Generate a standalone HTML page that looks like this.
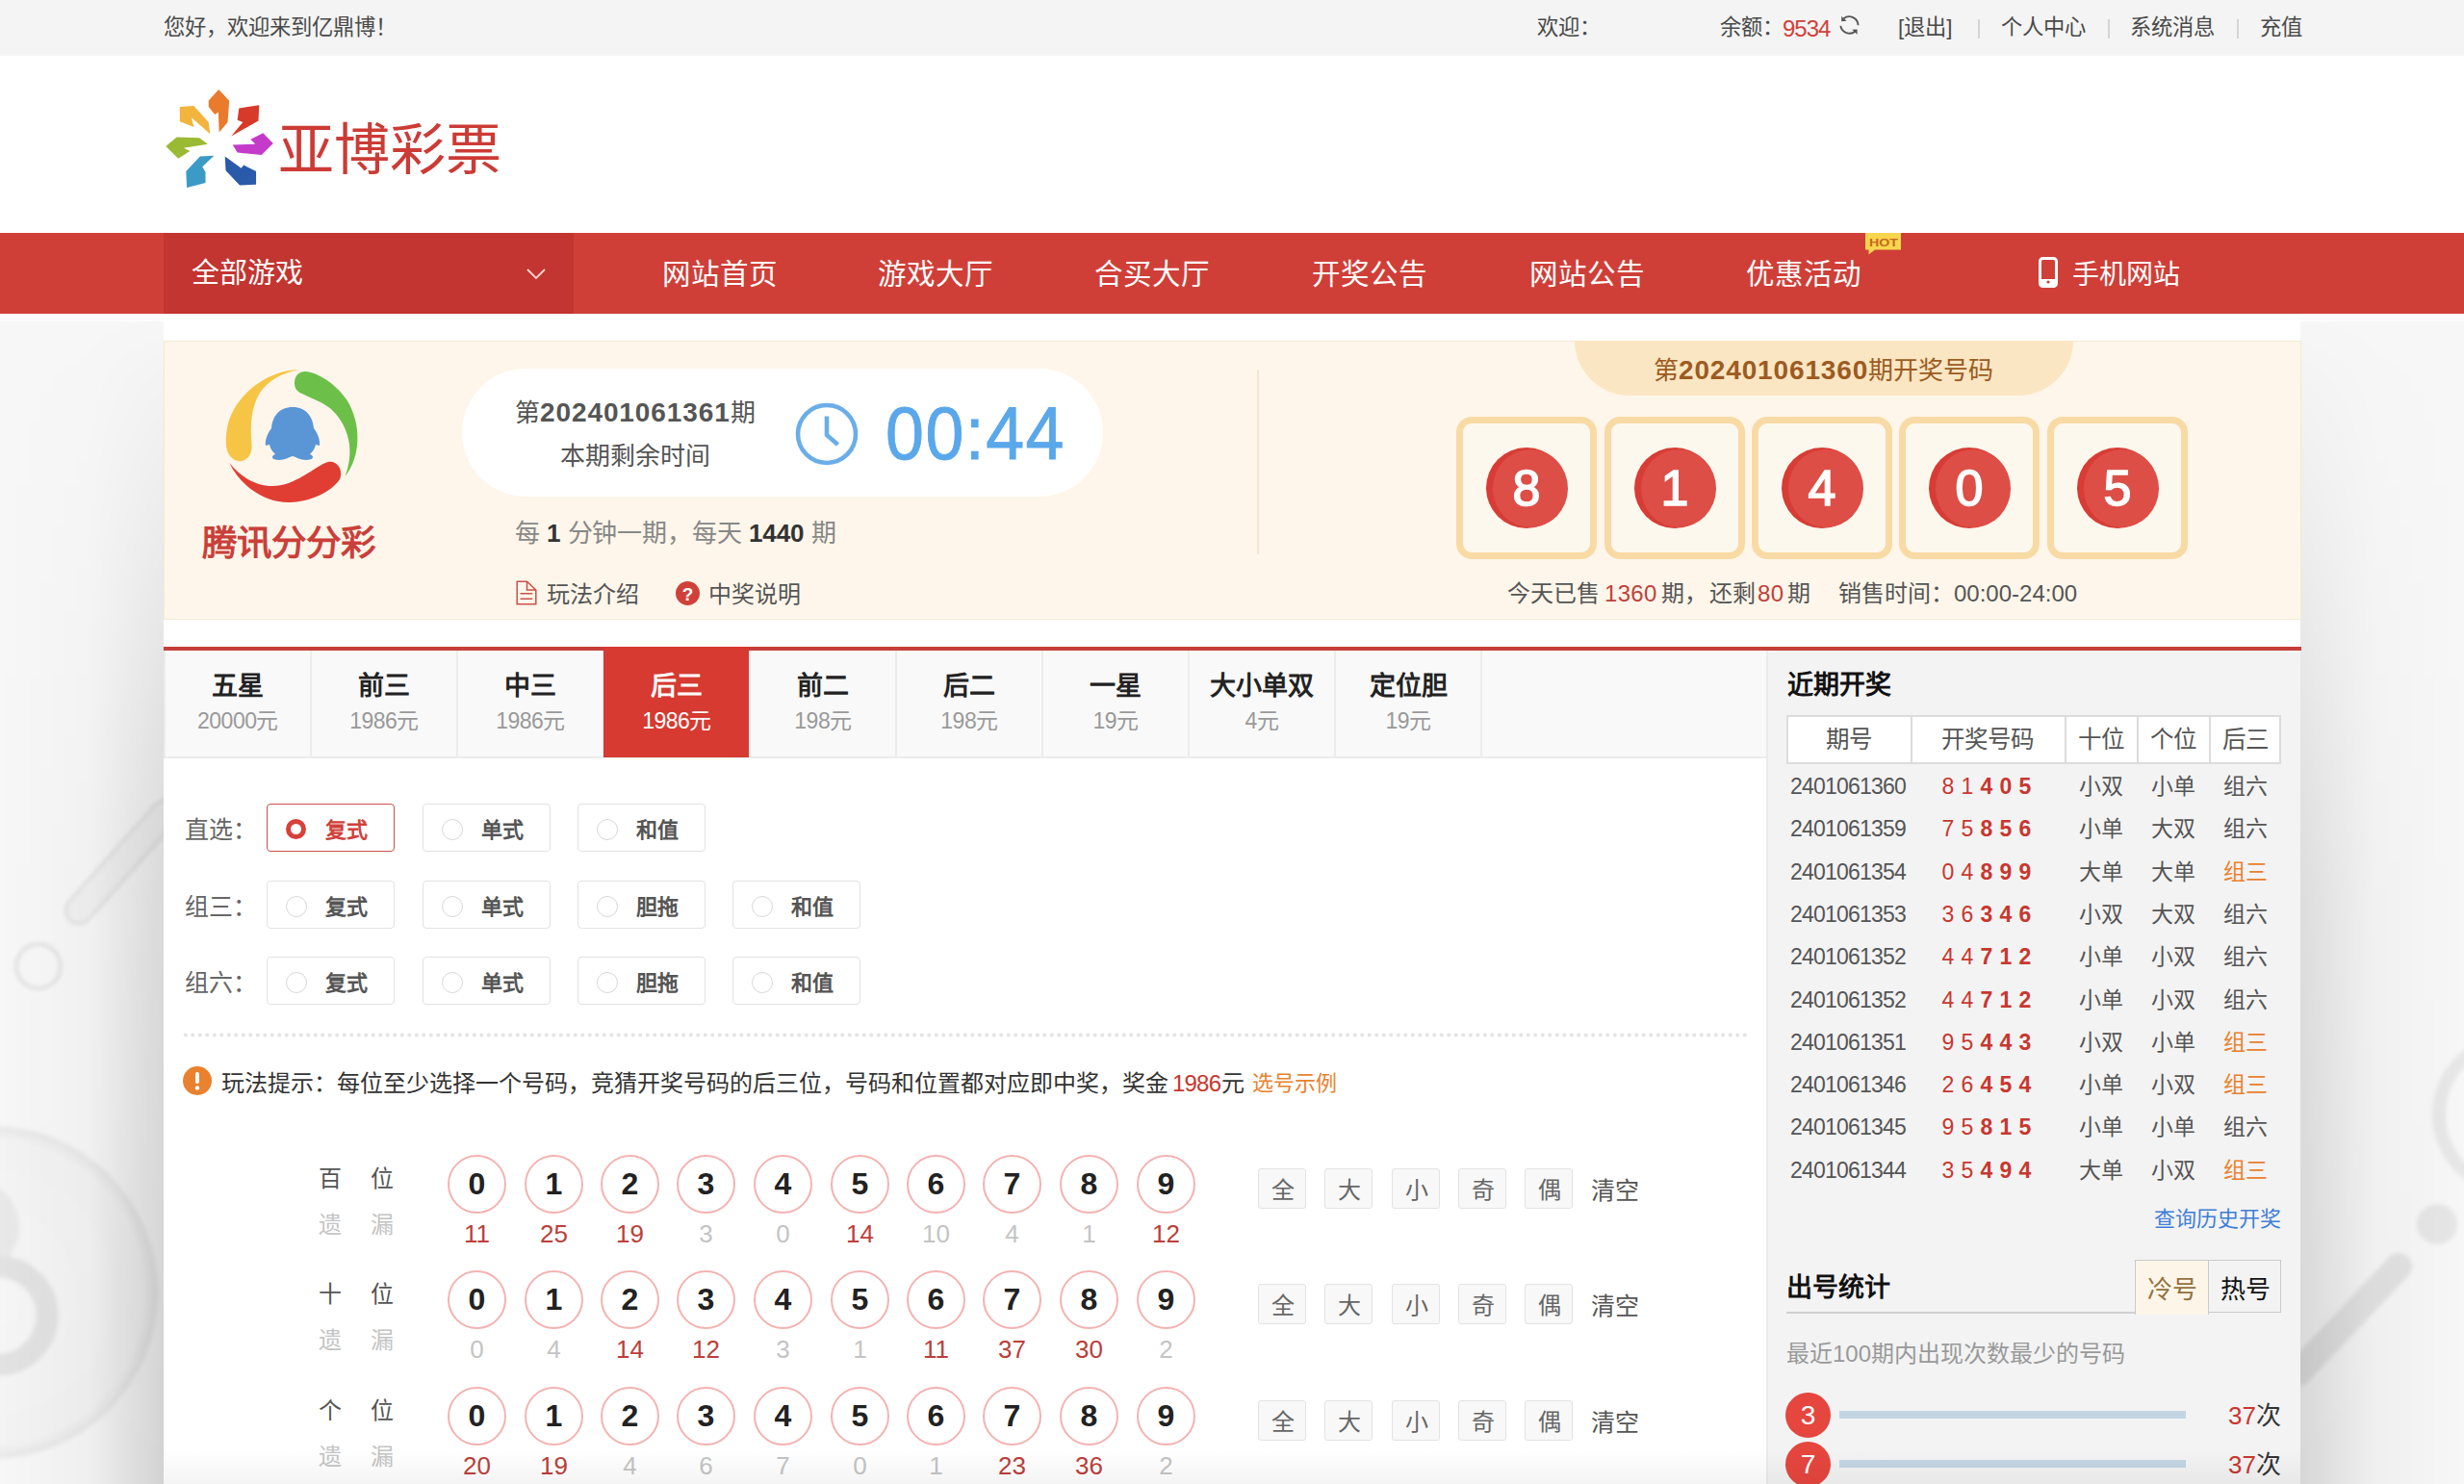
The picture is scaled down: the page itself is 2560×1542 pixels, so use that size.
<!DOCTYPE html>
<html lang="zh-CN"><head><meta charset="utf-8">
<style>
html,body{margin:0;padding:0;width:2560px;height:1542px;overflow:hidden;}
body{position:relative;font-family:"Liberation Sans",sans-serif;background:#efefef;color:#333;}
.a{position:absolute;}
.t{position:absolute;white-space:nowrap;line-height:1;}
.b{font-weight:bold;}
#bg{position:absolute;left:0;top:326px;width:2560px;height:1216px;}
#topbar{position:absolute;left:0;top:0;width:2560px;height:57.5px;background:#f4f4f4;}
#header{position:absolute;left:0;top:57.5px;width:2560px;height:184.5px;background:#fff;}
#nav{position:absolute;left:0;top:242px;width:2560px;height:84px;background:#cf3f38;}
#main{position:absolute;left:170px;top:326px;width:2220px;height:1216px;background:#fff;}
</style></head><body>

<svg id="bg" width="2560" height="1216" viewBox="0 326 2560 1216">
  <defs>
    <linearGradient id="shL" x1="0" y1="0" x2="1" y2="0">
      <stop offset="0" stop-color="#000" stop-opacity="0"/>
      <stop offset="0.55" stop-color="#000" stop-opacity="0.03"/>
      <stop offset="1" stop-color="#000" stop-opacity="0.15"/>
    </linearGradient>
    <linearGradient id="shR" x1="0" y1="0" x2="1" y2="0">
      <stop offset="0" stop-color="#000" stop-opacity="0.13"/>
      <stop offset="0.45" stop-color="#000" stop-opacity="0.03"/>
      <stop offset="1" stop-color="#000" stop-opacity="0"/>
    </linearGradient>
    <linearGradient id="mv" x1="0" y1="0" x2="0" y2="1">
      <stop offset="0" stop-color="#fff" stop-opacity="0"/>
      <stop offset="0.05" stop-color="#fff" stop-opacity="0.1"/>
      <stop offset="0.5" stop-color="#fff" stop-opacity="0.8"/>
      <stop offset="1" stop-color="#fff" stop-opacity="1"/>
    </linearGradient>
    <mask id="mk" maskUnits="userSpaceOnUse" x="0" y="326" width="2560" height="1216">
      <rect x="0" y="326" width="2560" height="1216" fill="url(#mv)"/>
    </mask>
    <radialGradient id="rgBig" cx="0.5" cy="0.5" r="0.5">
      <stop offset="0" stop-color="#f6f6f6"/>
      <stop offset="0.92" stop-color="#f3f3f3"/>
      <stop offset="1" stop-color="#e6e6e6"/>
    </radialGradient>
    <filter id="bl"><feGaussianBlur stdDeviation="2"/></filter>
  </defs>
  <rect x="0" y="326" width="2560" height="1216" fill="#f7f7f7"/>
  <rect x="0" y="326" width="2560" height="8" fill="#fdfdfd"/>
  <g filter="url(#bl)">
    <circle cx="-9" cy="1343" r="173" fill="url(#rgBig)"/>
    <circle cx="-30" cy="1275" r="50" fill="#e8e8e8"/>
    <circle cx="-2" cy="1367" r="51" fill="none" stroke="#e2e2e2" stroke-width="23"/>
    <circle cx="40" cy="1004" r="23" fill="none" stroke="#dcdcdc" stroke-width="3"/>
    <path d="M171,846 L82,946" stroke="#dddddd" stroke-width="30" stroke-linecap="round"/>
    <path d="M171,846 L82,946" stroke="#f1f1f1" stroke-width="25" stroke-linecap="round"/>
    <circle cx="2612" cy="1158" r="78" fill="none" stroke="#e7e7e7" stroke-width="14"/>
    <circle cx="2532" cy="1272" r="21" fill="#e6e6e6"/>
    <path d="M2492,1316 L2388,1426" stroke="#e3e3e3" stroke-width="28" stroke-linecap="round"/>
  </g>
  <g mask="url(#mk)">
    <rect x="0" y="326" width="171" height="1216" fill="url(#shL)"/>
    <rect x="2390" y="326" width="170" height="1216" fill="url(#shR)"/>
  </g>
</svg>
<div id="topbar"></div>
<div id="header"></div>
<div id="nav"></div>
<div id="main"></div>

<div class="t" style="left:170px;top:18px;font-size:22.3px;color:#4a4a4a;">您好，欢迎来到亿鼎博！</div>
<div class="t" style="left:1597px;top:18px;font-size:22.3px;color:#4a4a4a;">欢迎：</div>
<div class="t" style="left:1787px;top:18px;font-size:22.3px;color:#4a4a4a;">余额：</div>
<div class="t" style="left:1852px;top:18px;font-size:24px;color:#d0413a;letter-spacing:-1px">9534</div>
<svg class="a" style="left:1900px;top:10px" width="45" height="38" viewBox="0 0 45 38"><path d="M15.5,9.2 A9.4,9.4 0 0 1 30.6,16.2 M12.3,16.9 A9.4,9.4 0 0 0 27.6,22.4" fill="none" stroke="#555" stroke-width="1.9"/><path d="M13.2,7 L13.2,12.2 L18.6,11.8 Z M29.6,20.4 L29.6,25.8 L24.2,20.8 Z" fill="#555"/></svg>
<div class="t" style="left:1972px;top:18px;font-size:22.3px;color:#4a4a4a;">[退出]</div>
<div class="a" style="left:2055px;top:20px;width:2px;height:20px;background:#d5d5d5"></div>
<div class="a" style="left:2190px;top:20px;width:2px;height:20px;background:#d5d5d5"></div>
<div class="a" style="left:2324px;top:20px;width:2px;height:20px;background:#d5d5d5"></div>
<div class="t" style="left:2079px;top:18px;font-size:22.3px;color:#4a4a4a;">个人中心</div>
<div class="t" style="left:2213px;top:18px;font-size:22.3px;color:#4a4a4a;">系统消息</div>
<div class="t" style="left:2348px;top:18px;font-size:22.3px;color:#4a4a4a;">充值</div>
<svg class="a" style="left:165px;top:85px" width="130" height="120" viewBox="0 0 1608 1484"><path d="M640,240 L770,100 L905,245 L885,520 L775,650 L765,390 L720,420 L640,320 Z" fill="#ea7b2c"/><path d="M1030,340 L1290,300 L1280,500 L930,700 L1080,520 L1010,490 Z" fill="#d83a2a"/><path d="M1180,740 L1340,660 L1470,790 L1320,940 L1010,910 L950,810 L1240,800 Z" fill="#c53bc9"/><path d="M850,960 L1060,1110 L1090,1070 L1250,1150 L1250,1320 L1040,1330 L860,1140 Z" fill="#2a5aaa"/><path d="M710,950 L560,1090 L600,1160 L600,1300 L360,1360 L350,1150 L530,960 Z" fill="#3c9ac6"/><path d="M90,830 L230,710 L520,720 L630,800 L320,850 L400,890 L250,985 Z" fill="#9bba33"/><path d="M270,320 L450,310 L640,520 L660,670 L420,460 L450,580 L270,510 Z" fill="#f2b43c"/></svg>
<div class="t" style="left:289px;top:127px;font-size:58px;color:#cc3b35;">亚博彩票</div>
<div class="a" style="left:170px;top:242px;width:426px;height:84px;background:#c33530"></div>
<div class="t" style="left:199px;top:270px;font-size:29px;color:#fff;">全部游戏</div>
<svg class="a" style="left:546px;top:277px" width="22" height="16" viewBox="0 0 22 16"><path d="M2,3 L11,12 L20,3" fill="none" stroke="#f6d4d1" stroke-width="1.8"/></svg>
<div class="t" style="left:688px;top:270px;font-size:29.5px;color:#fff;">网站首页</div>
<div class="t" style="left:912px;top:270px;font-size:29.5px;color:#fff;">游戏大厅</div>
<div class="t" style="left:1137px;top:270px;font-size:29.5px;color:#fff;">合买大厅</div>
<div class="t" style="left:1363px;top:270px;font-size:29.5px;color:#fff;">开奖公告</div>
<div class="t" style="left:1589px;top:270px;font-size:29.5px;color:#fff;">网站公告</div>
<div class="t" style="left:1814px;top:270px;font-size:29.5px;color:#fff;">优惠活动</div>
<svg class="a" style="left:1938px;top:242px" width="38" height="23" viewBox="0 0 38 23"><path d="M0,0 H37 V17.5 H10 L3.5,22.5 L3.5,17.5 H0 Z" fill="#f7d54e"/><text x="4" y="13.6" font-family="Liberation Sans" font-weight="bold" font-size="11.5" fill="#c2691f" textLength="30" lengthAdjust="spacingAndGlyphs">HOT</text></svg>
<svg class="a" style="left:2118px;top:267px" width="20" height="32" viewBox="0 0 20 32"><rect x="1.5" y="1.5" width="17" height="29" rx="3" fill="none" stroke="#fff" stroke-width="3"/><rect x="3" y="23" width="14" height="6" fill="#fff"/><circle cx="10" cy="26" r="1.6" fill="#cf3f38"/></svg>
<div class="t" style="left:2153px;top:272px;font-size:28px;color:#fff;">手机网站</div>
<div class="a" style="left:170px;top:354px;width:2219px;height:288px;background:#fef6ea;border:1px solid #f5ead7"></div>
<svg class="a" style="left:220px;top:370px" width="170" height="170" viewBox="0 0 170 170">
  <path d="M90.5,14.3 C60,14 22,40 16,75 C13,92 15,103 24,108 C33,112 42,105 41.5,93 C40,75 40,55 50,38 C60,24 75,17 90.5,14.3 Z" fill="#f6c546"/>
  <path d="M97,16 C86,16 84,28 88,35 C93,41 110,44 124,55 C140,70 150,95 138.6,125 C155,105 156,70 140,45 C128,28 110,17 97,16 Z" fill="#6cc04a"/>
  <path d="M18.3,111 C30,135 55,153 82,152 C105,151 125,140 133,128 C137,118 130,108 121,110 C112,112 100,124 80,132 C58,140 35,132 18.3,111 Z" fill="#e03d33"/>
  <path d="M84,53 C70,53 63,63 62,75 C58,80 55,88 56,93 L60,92 C61,97 64,100 66,102 C61,104 62,108 70,108 C76,108 80,105 84,104 C88,105 92,108 98,108 C106,108 107,104 102,102 C104,100 107,97 108,92 L112,93 C113,88 110,80 106,75 C105,63 98,53 84,53 Z" fill="#5a96d6"/>
</svg>
<div class="t" style="left:210px;top:547px;font-size:36.5px;color:#c9403a;font-weight:bold">腾讯分分彩</div>
<div class="a" style="left:480px;top:383px;width:666px;height:133px;border-radius:67px;background:#fff"></div>
<div class="t" style="left:535px;top:415px;font-size:26px;color:#555;">第<b style="color:#555;font-size:28px;letter-spacing:0.9px">202401061361</b>期</div>
<div class="t" style="left:582px;top:461px;font-size:26px;color:#555;">本期剩余时间</div>
<svg class="a" style="left:826px;top:418px" width="66" height="66" viewBox="0 0 66 66"><circle cx="33" cy="33" r="30" fill="none" stroke="#6aaee8" stroke-width="4.6"/><path d="M33,14.5 V34 L44.5,44" fill="none" stroke="#6aaee8" stroke-width="4.6" stroke-linecap="butt" stroke-linejoin="miter"/></svg>
<div class="t" style="left:919.5px;top:411px;font-size:78px;color:#5aa7ea;letter-spacing:1.6px;transform:scaleX(0.92);transform-origin:0 0;-webkit-text-stroke:0.9px #5aa7ea">00:44</div>
<div class="t" style="left:535px;top:541px;font-size:26px;color:#888;letter-spacing:-0.1px">每 <b style="color:#333">1</b> 分钟一期，每天 <b style="color:#333">1440</b> 期</div>
<svg class="a" style="left:536px;top:603px" width="22" height="26" viewBox="0 0 22 26"><path d="M1.2,1.2 H11.5 L20.8,10 V24.8 H1.2 Z M11.5,1.2 V10 H20.8" fill="none" stroke="#c9504a" stroke-width="1.5"/><path d="M4.5,13.8 H17.2 M4.5,19.3 H17.2" stroke="#c9504a" stroke-width="1.5"/></svg>
<div class="t" style="left:568px;top:606px;font-size:24px;color:#555;">玩法介绍</div>
<svg class="a" style="left:702px;top:604px" width="25" height="25" viewBox="0 0 25 25"><circle cx="12.5" cy="12.5" r="12.5" fill="#d0413a"/><text x="12.5" y="19.5" text-anchor="middle" font-family="Liberation Sans" font-weight="bold" font-size="19" fill="#fff">?</text></svg>
<div class="t" style="left:736px;top:606px;font-size:24px;color:#555;">中奖说明</div>
<div class="a" style="left:1306px;top:384px;width:2px;height:192px;background:#f3e6d2"></div>
<div class="a" style="left:1636px;top:354px;width:518px;height:57px;background:#fbe6c3;border-radius:0 0 57px 57px"></div>
<div class="t" style="left:1718px;top:371px;font-size:26px;color:#9c5b22;">第<b style="font-size:28px;letter-spacing:0.85px">202401061360</b>期开奖号码</div>
<div class="a" style="left:1513px;top:433px;width:132px;height:134px;border:7px solid #f8daa5;border-radius:16px;background:#fdf8ee"></div>
<div class="a" style="left:1544px;top:465px;width:84px;height:84px;border-radius:50%;background:#d83c35"></div>
<div class="a" style="left:1551px;top:467px;width:78px;height:81px;border-radius:50%;background:#dd4e46"></div>
<div class="t" style="left:1544px;top:481px;font-size:52px;color:#fff;width:84px;text-align:center;-webkit-text-stroke:1.6px #fff">8</div>
<div class="a" style="left:1667px;top:433px;width:132px;height:134px;border:7px solid #f8daa5;border-radius:16px;background:#fdf8ee"></div>
<div class="a" style="left:1698px;top:465px;width:84px;height:84px;border-radius:50%;background:#d83c35"></div>
<div class="a" style="left:1705px;top:467px;width:78px;height:81px;border-radius:50%;background:#dd4e46"></div>
<div class="t" style="left:1698px;top:481px;font-size:52px;color:#fff;width:84px;text-align:center;-webkit-text-stroke:1.6px #fff">1</div>
<div class="a" style="left:1820px;top:433px;width:132px;height:134px;border:7px solid #f8daa5;border-radius:16px;background:#fdf8ee"></div>
<div class="a" style="left:1851px;top:465px;width:84px;height:84px;border-radius:50%;background:#d83c35"></div>
<div class="a" style="left:1858px;top:467px;width:78px;height:81px;border-radius:50%;background:#dd4e46"></div>
<div class="t" style="left:1851px;top:481px;font-size:52px;color:#fff;width:84px;text-align:center;-webkit-text-stroke:1.6px #fff">4</div>
<div class="a" style="left:1973px;top:433px;width:132px;height:134px;border:7px solid #f8daa5;border-radius:16px;background:#fdf8ee"></div>
<div class="a" style="left:2004px;top:465px;width:84px;height:84px;border-radius:50%;background:#d83c35"></div>
<div class="a" style="left:2011px;top:467px;width:78px;height:81px;border-radius:50%;background:#dd4e46"></div>
<div class="t" style="left:2004px;top:481px;font-size:52px;color:#fff;width:84px;text-align:center;-webkit-text-stroke:1.6px #fff">0</div>
<div class="a" style="left:2127px;top:433px;width:132px;height:134px;border:7px solid #f8daa5;border-radius:16px;background:#fdf8ee"></div>
<div class="a" style="left:2158px;top:465px;width:84px;height:84px;border-radius:50%;background:#d83c35"></div>
<div class="a" style="left:2165px;top:467px;width:78px;height:81px;border-radius:50%;background:#dd4e46"></div>
<div class="t" style="left:2158px;top:481px;font-size:52px;color:#fff;width:84px;text-align:center;-webkit-text-stroke:1.6px #fff">5</div>
<div class="t" style="left:1566px;top:605px;font-size:24px;color:#555;">今天已售</div>
<div class="t" style="left:1667px;top:605px;font-size:24px;color:#c23f39;letter-spacing:0.3px">1360</div>
<div class="t" style="left:1726px;top:605px;font-size:24px;color:#555;">期，</div>
<div class="t" style="left:1776px;top:605px;font-size:24px;color:#555;">还剩</div>
<div class="t" style="left:1826px;top:605px;font-size:24px;color:#c23f39;letter-spacing:0.3px">80</div>
<div class="t" style="left:1857px;top:605px;font-size:24px;color:#555;">期</div>
<div class="t" style="left:1910px;top:605px;font-size:24px;color:#555;">销售时间：</div>
<div class="t" style="left:2030px;top:605px;font-size:24px;color:#555;letter-spacing:0px">00:00-24:00</div>
<div class="a" style="left:170px;top:672px;width:2221px;height:4px;background:#c53e37"></div>
<div class="a" style="left:170px;top:676px;width:1665px;height:110px;background:#f9f9f9"></div>
<div class="a" style="left:170px;top:786px;width:1665px;height:2px;background:#ececec"></div>
<div class="a" style="left:170px;top:676px;width:2px;height:110px;background:#ececec"></div>
<div class="a" style="left:1835px;top:676px;width:2px;height:866px;background:#ebebeb"></div>
<div class="a" style="left:1837px;top:676px;width:553px;height:866px;background:#f3f3f4"></div>
<div class="a" style="left:322px;top:676px;width:2px;height:110px;background:#ececec"></div>
<div class="t" style="left:172px;top:700px;font-size:27px;color:#222;width:150px;text-align:center;font-weight:bold">五星</div>
<div class="t" style="left:172px;top:738px;font-size:23px;color:#999;width:150px;text-align:center;letter-spacing:-0.5px">20000元</div>
<div class="a" style="left:474px;top:676px;width:2px;height:110px;background:#ececec"></div>
<div class="t" style="left:324px;top:700px;font-size:27px;color:#222;width:150px;text-align:center;font-weight:bold">前三</div>
<div class="t" style="left:324px;top:738px;font-size:23px;color:#999;width:150px;text-align:center;letter-spacing:-0.5px">1986元</div>
<div class="a" style="left:626px;top:676px;width:2px;height:110px;background:#ececec"></div>
<div class="t" style="left:476px;top:700px;font-size:27px;color:#222;width:150px;text-align:center;font-weight:bold">中三</div>
<div class="t" style="left:476px;top:738px;font-size:23px;color:#999;width:150px;text-align:center;letter-spacing:-0.5px">1986元</div>
<div class="a" style="left:778px;top:676px;width:2px;height:110px;background:#ececec"></div>
<div class="a" style="left:627px;top:672px;width:151px;height:115px;background:#d63a31"></div>
<div class="t" style="left:628px;top:700px;font-size:27px;color:#fff;width:150px;text-align:center;font-weight:bold">后三</div>
<div class="t" style="left:628px;top:738px;font-size:23px;color:#fff;width:150px;text-align:center;letter-spacing:-0.5px">1986元</div>
<div class="a" style="left:930px;top:676px;width:2px;height:110px;background:#ececec"></div>
<div class="t" style="left:780px;top:700px;font-size:27px;color:#222;width:150px;text-align:center;font-weight:bold">前二</div>
<div class="t" style="left:780px;top:738px;font-size:23px;color:#999;width:150px;text-align:center;letter-spacing:-0.5px">198元</div>
<div class="a" style="left:1082px;top:676px;width:2px;height:110px;background:#ececec"></div>
<div class="t" style="left:932px;top:700px;font-size:27px;color:#222;width:150px;text-align:center;font-weight:bold">后二</div>
<div class="t" style="left:932px;top:738px;font-size:23px;color:#999;width:150px;text-align:center;letter-spacing:-0.5px">198元</div>
<div class="a" style="left:1234px;top:676px;width:2px;height:110px;background:#ececec"></div>
<div class="t" style="left:1084px;top:700px;font-size:27px;color:#222;width:150px;text-align:center;font-weight:bold">一星</div>
<div class="t" style="left:1084px;top:738px;font-size:23px;color:#999;width:150px;text-align:center;letter-spacing:-0.5px">19元</div>
<div class="a" style="left:1386px;top:676px;width:2px;height:110px;background:#ececec"></div>
<div class="t" style="left:1236px;top:700px;font-size:27px;color:#222;width:150px;text-align:center;font-weight:bold">大小单双</div>
<div class="t" style="left:1236px;top:738px;font-size:23px;color:#999;width:150px;text-align:center;letter-spacing:-0.5px">4元</div>
<div class="a" style="left:1538px;top:676px;width:2px;height:110px;background:#ececec"></div>
<div class="t" style="left:1388px;top:700px;font-size:27px;color:#222;width:150px;text-align:center;font-weight:bold">定位胆</div>
<div class="t" style="left:1388px;top:738px;font-size:23px;color:#999;width:150px;text-align:center;letter-spacing:-0.5px">19元</div>
<div class="t" style="left:192px;top:850px;font-size:25px;color:#666;">直选：</div>
<div class="a" style="left:277px;top:835px;width:131px;height:48px;border:1.5px solid #c9514b;border-radius:4px;background:#fff"></div>
<div class="a" style="left:297px;top:851px;width:11px;height:11px;border:5.5px solid #d8403a;border-radius:50%"></div>
<div class="t" style="left:338px;top:852px;font-size:22px;color:#d0413a;font-weight:bold">复式</div>
<div class="a" style="left:439px;top:835px;width:131px;height:48px;border:1.5px solid #e2e2e2;border-radius:4px;background:#fff"></div>
<div class="a" style="left:459px;top:851px;width:20px;height:20px;border:1px solid #d8d8d8;border-radius:50%"></div>
<div class="t" style="left:500px;top:852px;font-size:22px;color:#555;font-weight:bold">单式</div>
<div class="a" style="left:600px;top:835px;width:131px;height:48px;border:1.5px solid #e2e2e2;border-radius:4px;background:#fff"></div>
<div class="a" style="left:620px;top:851px;width:20px;height:20px;border:1px solid #d8d8d8;border-radius:50%"></div>
<div class="t" style="left:661px;top:852px;font-size:22px;color:#555;font-weight:bold">和值</div>
<div class="t" style="left:192px;top:930px;font-size:25px;color:#666;">组三：</div>
<div class="a" style="left:277px;top:915px;width:131px;height:48px;border:1.5px solid #e2e2e2;border-radius:4px;background:#fff"></div>
<div class="a" style="left:297px;top:931px;width:20px;height:20px;border:1px solid #d8d8d8;border-radius:50%"></div>
<div class="t" style="left:338px;top:932px;font-size:22px;color:#555;font-weight:bold">复式</div>
<div class="a" style="left:439px;top:915px;width:131px;height:48px;border:1.5px solid #e2e2e2;border-radius:4px;background:#fff"></div>
<div class="a" style="left:459px;top:931px;width:20px;height:20px;border:1px solid #d8d8d8;border-radius:50%"></div>
<div class="t" style="left:500px;top:932px;font-size:22px;color:#555;font-weight:bold">单式</div>
<div class="a" style="left:600px;top:915px;width:131px;height:48px;border:1.5px solid #e2e2e2;border-radius:4px;background:#fff"></div>
<div class="a" style="left:620px;top:931px;width:20px;height:20px;border:1px solid #d8d8d8;border-radius:50%"></div>
<div class="t" style="left:661px;top:932px;font-size:22px;color:#555;font-weight:bold">胆拖</div>
<div class="a" style="left:761px;top:915px;width:131px;height:48px;border:1.5px solid #e2e2e2;border-radius:4px;background:#fff"></div>
<div class="a" style="left:781px;top:931px;width:20px;height:20px;border:1px solid #d8d8d8;border-radius:50%"></div>
<div class="t" style="left:822px;top:932px;font-size:22px;color:#555;font-weight:bold">和值</div>
<div class="t" style="left:192px;top:1009px;font-size:25px;color:#666;">组六：</div>
<div class="a" style="left:277px;top:994px;width:131px;height:48px;border:1.5px solid #e2e2e2;border-radius:4px;background:#fff"></div>
<div class="a" style="left:297px;top:1010px;width:20px;height:20px;border:1px solid #d8d8d8;border-radius:50%"></div>
<div class="t" style="left:338px;top:1011px;font-size:22px;color:#555;font-weight:bold">复式</div>
<div class="a" style="left:439px;top:994px;width:131px;height:48px;border:1.5px solid #e2e2e2;border-radius:4px;background:#fff"></div>
<div class="a" style="left:459px;top:1010px;width:20px;height:20px;border:1px solid #d8d8d8;border-radius:50%"></div>
<div class="t" style="left:500px;top:1011px;font-size:22px;color:#555;font-weight:bold">单式</div>
<div class="a" style="left:600px;top:994px;width:131px;height:48px;border:1.5px solid #e2e2e2;border-radius:4px;background:#fff"></div>
<div class="a" style="left:620px;top:1010px;width:20px;height:20px;border:1px solid #d8d8d8;border-radius:50%"></div>
<div class="t" style="left:661px;top:1011px;font-size:22px;color:#555;font-weight:bold">胆拖</div>
<div class="a" style="left:761px;top:994px;width:131px;height:48px;border:1.5px solid #e2e2e2;border-radius:4px;background:#fff"></div>
<div class="a" style="left:781px;top:1010px;width:20px;height:20px;border:1px solid #d8d8d8;border-radius:50%"></div>
<div class="t" style="left:822px;top:1011px;font-size:22px;color:#555;font-weight:bold">和值</div>
<div class="a" style="left:189px;top:1073px;width:1628px;height:5px;background:radial-gradient(circle at 50% 50%, #e4e4e4 1.6px, rgba(255,255,255,0) 2.4px) 0 0/7.5px 5px repeat-x"></div>
<svg class="a" style="left:190px;top:1108px" width="30" height="30" viewBox="0 0 30 30"><circle cx="15" cy="15" r="15" fill="#e9812e"/><rect x="13" y="6" width="4" height="12" rx="2" fill="#fff"/><circle cx="15" cy="22.5" r="2.2" fill="#fff"/></svg>
<div class="t" style="left:230px;top:1114px;font-size:24px;color:#333;">玩法提示：每位至少选择一个号码，竞猜开奖号码的后三位，号码和位置都对应即中奖，奖金</div>
<div class="t" style="left:1218px;top:1114px;font-size:24px;color:#c8372f;letter-spacing:-0.8px">1986</div>
<div class="t" style="left:1269px;top:1114px;font-size:24px;color:#333;">元</div>
<div class="t" style="left:1301px;top:1115px;font-size:22px;color:#e9812e;">选号示例</div>
<div class="t" style="left:331px;top:1213px;font-size:24px;color:#555;">百</div>
<div class="t" style="left:385px;top:1213px;font-size:24px;color:#555;">位</div>
<div class="t" style="left:331px;top:1261px;font-size:24px;color:#c4c4c4;">遗</div>
<div class="t" style="left:385px;top:1261px;font-size:24px;color:#c4c4c4;">漏</div>
<div class="a" style="left:465px;top:1200px;width:57px;height:57px;border:2px solid #f3b3b1;border-radius:50%;background:#fff"></div>
<div class="t" style="left:465px;top:1214px;font-size:32px;color:#222;width:61px;text-align:center;font-weight:bold">0</div>
<div class="t" style="left:465px;top:1269px;font-size:26px;color:#bb3f3b;width:61px;text-align:center">11</div>
<div class="a" style="left:545px;top:1200px;width:57px;height:57px;border:2px solid #f3b3b1;border-radius:50%;background:#fff"></div>
<div class="t" style="left:545px;top:1214px;font-size:32px;color:#222;width:61px;text-align:center;font-weight:bold">1</div>
<div class="t" style="left:545px;top:1269px;font-size:26px;color:#bb3f3b;width:61px;text-align:center">25</div>
<div class="a" style="left:624px;top:1200px;width:57px;height:57px;border:2px solid #f3b3b1;border-radius:50%;background:#fff"></div>
<div class="t" style="left:624px;top:1214px;font-size:32px;color:#222;width:61px;text-align:center;font-weight:bold">2</div>
<div class="t" style="left:624px;top:1269px;font-size:26px;color:#bb3f3b;width:61px;text-align:center">19</div>
<div class="a" style="left:703px;top:1200px;width:57px;height:57px;border:2px solid #f3b3b1;border-radius:50%;background:#fff"></div>
<div class="t" style="left:703px;top:1214px;font-size:32px;color:#222;width:61px;text-align:center;font-weight:bold">3</div>
<div class="t" style="left:703px;top:1269px;font-size:26px;color:#c4c4c4;width:61px;text-align:center">3</div>
<div class="a" style="left:783px;top:1200px;width:57px;height:57px;border:2px solid #f3b3b1;border-radius:50%;background:#fff"></div>
<div class="t" style="left:783px;top:1214px;font-size:32px;color:#222;width:61px;text-align:center;font-weight:bold">4</div>
<div class="t" style="left:783px;top:1269px;font-size:26px;color:#c4c4c4;width:61px;text-align:center">0</div>
<div class="a" style="left:863px;top:1200px;width:57px;height:57px;border:2px solid #f3b3b1;border-radius:50%;background:#fff"></div>
<div class="t" style="left:863px;top:1214px;font-size:32px;color:#222;width:61px;text-align:center;font-weight:bold">5</div>
<div class="t" style="left:863px;top:1269px;font-size:26px;color:#bb3f3b;width:61px;text-align:center">14</div>
<div class="a" style="left:942px;top:1200px;width:57px;height:57px;border:2px solid #f3b3b1;border-radius:50%;background:#fff"></div>
<div class="t" style="left:942px;top:1214px;font-size:32px;color:#222;width:61px;text-align:center;font-weight:bold">6</div>
<div class="t" style="left:942px;top:1269px;font-size:26px;color:#c4c4c4;width:61px;text-align:center">10</div>
<div class="a" style="left:1021px;top:1200px;width:57px;height:57px;border:2px solid #f3b3b1;border-radius:50%;background:#fff"></div>
<div class="t" style="left:1021px;top:1214px;font-size:32px;color:#222;width:61px;text-align:center;font-weight:bold">7</div>
<div class="t" style="left:1021px;top:1269px;font-size:26px;color:#c4c4c4;width:61px;text-align:center">4</div>
<div class="a" style="left:1101px;top:1200px;width:57px;height:57px;border:2px solid #f3b3b1;border-radius:50%;background:#fff"></div>
<div class="t" style="left:1101px;top:1214px;font-size:32px;color:#222;width:61px;text-align:center;font-weight:bold">8</div>
<div class="t" style="left:1101px;top:1269px;font-size:26px;color:#c4c4c4;width:61px;text-align:center">1</div>
<div class="a" style="left:1181px;top:1200px;width:57px;height:57px;border:2px solid #f3b3b1;border-radius:50%;background:#fff"></div>
<div class="t" style="left:1181px;top:1214px;font-size:32px;color:#222;width:61px;text-align:center;font-weight:bold">9</div>
<div class="t" style="left:1181px;top:1269px;font-size:26px;color:#bb3f3b;width:61px;text-align:center">12</div>
<div class="a" style="left:1307px;top:1214px;width:48px;height:40px;border:1.5px solid #e3e3e3;border-radius:3px;background:#f8f8f8"></div>
<div class="t" style="left:1307px;top:1225px;font-size:24px;color:#666;width:51px;text-align:center">全</div>
<div class="a" style="left:1376px;top:1214px;width:48px;height:40px;border:1.5px solid #e3e3e3;border-radius:3px;background:#f8f8f8"></div>
<div class="t" style="left:1376px;top:1225px;font-size:24px;color:#666;width:51px;text-align:center">大</div>
<div class="a" style="left:1446px;top:1214px;width:48px;height:40px;border:1.5px solid #e3e3e3;border-radius:3px;background:#f8f8f8"></div>
<div class="t" style="left:1446px;top:1225px;font-size:24px;color:#666;width:51px;text-align:center">小</div>
<div class="a" style="left:1515px;top:1214px;width:48px;height:40px;border:1.5px solid #e3e3e3;border-radius:3px;background:#f8f8f8"></div>
<div class="t" style="left:1515px;top:1225px;font-size:24px;color:#666;width:51px;text-align:center">奇</div>
<div class="a" style="left:1584px;top:1214px;width:48px;height:40px;border:1.5px solid #e3e3e3;border-radius:3px;background:#f8f8f8"></div>
<div class="t" style="left:1584px;top:1225px;font-size:24px;color:#666;width:51px;text-align:center">偶</div>
<div class="t" style="left:1653px;top:1225px;font-size:25px;color:#555;">清空</div>
<div class="t" style="left:331px;top:1333px;font-size:24px;color:#555;">十</div>
<div class="t" style="left:385px;top:1333px;font-size:24px;color:#555;">位</div>
<div class="t" style="left:331px;top:1381px;font-size:24px;color:#c4c4c4;">遗</div>
<div class="t" style="left:385px;top:1381px;font-size:24px;color:#c4c4c4;">漏</div>
<div class="a" style="left:465px;top:1320px;width:57px;height:57px;border:2px solid #f3b3b1;border-radius:50%;background:#fff"></div>
<div class="t" style="left:465px;top:1334px;font-size:32px;color:#222;width:61px;text-align:center;font-weight:bold">0</div>
<div class="t" style="left:465px;top:1389px;font-size:26px;color:#c4c4c4;width:61px;text-align:center">0</div>
<div class="a" style="left:545px;top:1320px;width:57px;height:57px;border:2px solid #f3b3b1;border-radius:50%;background:#fff"></div>
<div class="t" style="left:545px;top:1334px;font-size:32px;color:#222;width:61px;text-align:center;font-weight:bold">1</div>
<div class="t" style="left:545px;top:1389px;font-size:26px;color:#c4c4c4;width:61px;text-align:center">4</div>
<div class="a" style="left:624px;top:1320px;width:57px;height:57px;border:2px solid #f3b3b1;border-radius:50%;background:#fff"></div>
<div class="t" style="left:624px;top:1334px;font-size:32px;color:#222;width:61px;text-align:center;font-weight:bold">2</div>
<div class="t" style="left:624px;top:1389px;font-size:26px;color:#bb3f3b;width:61px;text-align:center">14</div>
<div class="a" style="left:703px;top:1320px;width:57px;height:57px;border:2px solid #f3b3b1;border-radius:50%;background:#fff"></div>
<div class="t" style="left:703px;top:1334px;font-size:32px;color:#222;width:61px;text-align:center;font-weight:bold">3</div>
<div class="t" style="left:703px;top:1389px;font-size:26px;color:#bb3f3b;width:61px;text-align:center">12</div>
<div class="a" style="left:783px;top:1320px;width:57px;height:57px;border:2px solid #f3b3b1;border-radius:50%;background:#fff"></div>
<div class="t" style="left:783px;top:1334px;font-size:32px;color:#222;width:61px;text-align:center;font-weight:bold">4</div>
<div class="t" style="left:783px;top:1389px;font-size:26px;color:#c4c4c4;width:61px;text-align:center">3</div>
<div class="a" style="left:863px;top:1320px;width:57px;height:57px;border:2px solid #f3b3b1;border-radius:50%;background:#fff"></div>
<div class="t" style="left:863px;top:1334px;font-size:32px;color:#222;width:61px;text-align:center;font-weight:bold">5</div>
<div class="t" style="left:863px;top:1389px;font-size:26px;color:#c4c4c4;width:61px;text-align:center">1</div>
<div class="a" style="left:942px;top:1320px;width:57px;height:57px;border:2px solid #f3b3b1;border-radius:50%;background:#fff"></div>
<div class="t" style="left:942px;top:1334px;font-size:32px;color:#222;width:61px;text-align:center;font-weight:bold">6</div>
<div class="t" style="left:942px;top:1389px;font-size:26px;color:#bb3f3b;width:61px;text-align:center">11</div>
<div class="a" style="left:1021px;top:1320px;width:57px;height:57px;border:2px solid #f3b3b1;border-radius:50%;background:#fff"></div>
<div class="t" style="left:1021px;top:1334px;font-size:32px;color:#222;width:61px;text-align:center;font-weight:bold">7</div>
<div class="t" style="left:1021px;top:1389px;font-size:26px;color:#bb3f3b;width:61px;text-align:center">37</div>
<div class="a" style="left:1101px;top:1320px;width:57px;height:57px;border:2px solid #f3b3b1;border-radius:50%;background:#fff"></div>
<div class="t" style="left:1101px;top:1334px;font-size:32px;color:#222;width:61px;text-align:center;font-weight:bold">8</div>
<div class="t" style="left:1101px;top:1389px;font-size:26px;color:#bb3f3b;width:61px;text-align:center">30</div>
<div class="a" style="left:1181px;top:1320px;width:57px;height:57px;border:2px solid #f3b3b1;border-radius:50%;background:#fff"></div>
<div class="t" style="left:1181px;top:1334px;font-size:32px;color:#222;width:61px;text-align:center;font-weight:bold">9</div>
<div class="t" style="left:1181px;top:1389px;font-size:26px;color:#c4c4c4;width:61px;text-align:center">2</div>
<div class="a" style="left:1307px;top:1334px;width:48px;height:40px;border:1.5px solid #e3e3e3;border-radius:3px;background:#f8f8f8"></div>
<div class="t" style="left:1307px;top:1345px;font-size:24px;color:#666;width:51px;text-align:center">全</div>
<div class="a" style="left:1376px;top:1334px;width:48px;height:40px;border:1.5px solid #e3e3e3;border-radius:3px;background:#f8f8f8"></div>
<div class="t" style="left:1376px;top:1345px;font-size:24px;color:#666;width:51px;text-align:center">大</div>
<div class="a" style="left:1446px;top:1334px;width:48px;height:40px;border:1.5px solid #e3e3e3;border-radius:3px;background:#f8f8f8"></div>
<div class="t" style="left:1446px;top:1345px;font-size:24px;color:#666;width:51px;text-align:center">小</div>
<div class="a" style="left:1515px;top:1334px;width:48px;height:40px;border:1.5px solid #e3e3e3;border-radius:3px;background:#f8f8f8"></div>
<div class="t" style="left:1515px;top:1345px;font-size:24px;color:#666;width:51px;text-align:center">奇</div>
<div class="a" style="left:1584px;top:1334px;width:48px;height:40px;border:1.5px solid #e3e3e3;border-radius:3px;background:#f8f8f8"></div>
<div class="t" style="left:1584px;top:1345px;font-size:24px;color:#666;width:51px;text-align:center">偶</div>
<div class="t" style="left:1653px;top:1345px;font-size:25px;color:#555;">清空</div>
<div class="t" style="left:331px;top:1454px;font-size:24px;color:#555;">个</div>
<div class="t" style="left:385px;top:1454px;font-size:24px;color:#555;">位</div>
<div class="t" style="left:331px;top:1502px;font-size:24px;color:#c4c4c4;">遗</div>
<div class="t" style="left:385px;top:1502px;font-size:24px;color:#c4c4c4;">漏</div>
<div class="a" style="left:465px;top:1441px;width:57px;height:57px;border:2px solid #f3b3b1;border-radius:50%;background:#fff"></div>
<div class="t" style="left:465px;top:1455px;font-size:32px;color:#222;width:61px;text-align:center;font-weight:bold">0</div>
<div class="t" style="left:465px;top:1510px;font-size:26px;color:#bb3f3b;width:61px;text-align:center">20</div>
<div class="a" style="left:545px;top:1441px;width:57px;height:57px;border:2px solid #f3b3b1;border-radius:50%;background:#fff"></div>
<div class="t" style="left:545px;top:1455px;font-size:32px;color:#222;width:61px;text-align:center;font-weight:bold">1</div>
<div class="t" style="left:545px;top:1510px;font-size:26px;color:#bb3f3b;width:61px;text-align:center">19</div>
<div class="a" style="left:624px;top:1441px;width:57px;height:57px;border:2px solid #f3b3b1;border-radius:50%;background:#fff"></div>
<div class="t" style="left:624px;top:1455px;font-size:32px;color:#222;width:61px;text-align:center;font-weight:bold">2</div>
<div class="t" style="left:624px;top:1510px;font-size:26px;color:#c4c4c4;width:61px;text-align:center">4</div>
<div class="a" style="left:703px;top:1441px;width:57px;height:57px;border:2px solid #f3b3b1;border-radius:50%;background:#fff"></div>
<div class="t" style="left:703px;top:1455px;font-size:32px;color:#222;width:61px;text-align:center;font-weight:bold">3</div>
<div class="t" style="left:703px;top:1510px;font-size:26px;color:#c4c4c4;width:61px;text-align:center">6</div>
<div class="a" style="left:783px;top:1441px;width:57px;height:57px;border:2px solid #f3b3b1;border-radius:50%;background:#fff"></div>
<div class="t" style="left:783px;top:1455px;font-size:32px;color:#222;width:61px;text-align:center;font-weight:bold">4</div>
<div class="t" style="left:783px;top:1510px;font-size:26px;color:#c4c4c4;width:61px;text-align:center">7</div>
<div class="a" style="left:863px;top:1441px;width:57px;height:57px;border:2px solid #f3b3b1;border-radius:50%;background:#fff"></div>
<div class="t" style="left:863px;top:1455px;font-size:32px;color:#222;width:61px;text-align:center;font-weight:bold">5</div>
<div class="t" style="left:863px;top:1510px;font-size:26px;color:#c4c4c4;width:61px;text-align:center">0</div>
<div class="a" style="left:942px;top:1441px;width:57px;height:57px;border:2px solid #f3b3b1;border-radius:50%;background:#fff"></div>
<div class="t" style="left:942px;top:1455px;font-size:32px;color:#222;width:61px;text-align:center;font-weight:bold">6</div>
<div class="t" style="left:942px;top:1510px;font-size:26px;color:#c4c4c4;width:61px;text-align:center">1</div>
<div class="a" style="left:1021px;top:1441px;width:57px;height:57px;border:2px solid #f3b3b1;border-radius:50%;background:#fff"></div>
<div class="t" style="left:1021px;top:1455px;font-size:32px;color:#222;width:61px;text-align:center;font-weight:bold">7</div>
<div class="t" style="left:1021px;top:1510px;font-size:26px;color:#bb3f3b;width:61px;text-align:center">23</div>
<div class="a" style="left:1101px;top:1441px;width:57px;height:57px;border:2px solid #f3b3b1;border-radius:50%;background:#fff"></div>
<div class="t" style="left:1101px;top:1455px;font-size:32px;color:#222;width:61px;text-align:center;font-weight:bold">8</div>
<div class="t" style="left:1101px;top:1510px;font-size:26px;color:#bb3f3b;width:61px;text-align:center">36</div>
<div class="a" style="left:1181px;top:1441px;width:57px;height:57px;border:2px solid #f3b3b1;border-radius:50%;background:#fff"></div>
<div class="t" style="left:1181px;top:1455px;font-size:32px;color:#222;width:61px;text-align:center;font-weight:bold">9</div>
<div class="t" style="left:1181px;top:1510px;font-size:26px;color:#c4c4c4;width:61px;text-align:center">2</div>
<div class="a" style="left:1307px;top:1455px;width:48px;height:40px;border:1.5px solid #e3e3e3;border-radius:3px;background:#f8f8f8"></div>
<div class="t" style="left:1307px;top:1466px;font-size:24px;color:#666;width:51px;text-align:center">全</div>
<div class="a" style="left:1376px;top:1455px;width:48px;height:40px;border:1.5px solid #e3e3e3;border-radius:3px;background:#f8f8f8"></div>
<div class="t" style="left:1376px;top:1466px;font-size:24px;color:#666;width:51px;text-align:center">大</div>
<div class="a" style="left:1446px;top:1455px;width:48px;height:40px;border:1.5px solid #e3e3e3;border-radius:3px;background:#f8f8f8"></div>
<div class="t" style="left:1446px;top:1466px;font-size:24px;color:#666;width:51px;text-align:center">小</div>
<div class="a" style="left:1515px;top:1455px;width:48px;height:40px;border:1.5px solid #e3e3e3;border-radius:3px;background:#f8f8f8"></div>
<div class="t" style="left:1515px;top:1466px;font-size:24px;color:#666;width:51px;text-align:center">奇</div>
<div class="a" style="left:1584px;top:1455px;width:48px;height:40px;border:1.5px solid #e3e3e3;border-radius:3px;background:#f8f8f8"></div>
<div class="t" style="left:1584px;top:1466px;font-size:24px;color:#666;width:51px;text-align:center">偶</div>
<div class="t" style="left:1653px;top:1466px;font-size:25px;color:#555;">清空</div>
<div class="t" style="left:1857px;top:699px;font-size:27px;color:#111;font-weight:bold">近期开奖</div>
<div class="a" style="left:1856px;top:743px;width:510px;height:47px;border:2px solid #dcdcdc;background:#fff"></div>
<div class="t" style="left:1856px;top:757px;font-size:24.5px;color:#555;width:129px;text-align:center">期号</div>
<div class="a" style="left:1985px;top:743px;width:2px;height:51px;background:#dcdcdc"></div>
<div class="t" style="left:1985px;top:757px;font-size:24.5px;color:#555;width:160px;text-align:center">开奖号码</div>
<div class="a" style="left:2145px;top:743px;width:2px;height:51px;background:#dcdcdc"></div>
<div class="t" style="left:2145px;top:757px;font-size:24.5px;color:#555;width:75px;text-align:center">十位</div>
<div class="a" style="left:2220px;top:743px;width:2px;height:51px;background:#dcdcdc"></div>
<div class="t" style="left:2220px;top:757px;font-size:24.5px;color:#555;width:75px;text-align:center">个位</div>
<div class="a" style="left:2295px;top:743px;width:2px;height:51px;background:#dcdcdc"></div>
<div class="t" style="left:2295px;top:757px;font-size:24.5px;color:#555;width:75px;text-align:center">后三</div>
<div class="t" style="left:1860px;top:806px;font-size:23px;color:#555;letter-spacing:-0.8px">2401061360</div>
<div class="t" style="left:2014px;top:806px;font-size:23px;color:#c8372f;"><span style="display:inline-block;width:20px;text-align:center">8</span><span style="display:inline-block;width:20px;text-align:center">1</span><span style="display:inline-block;width:20px;text-align:center;font-weight:bold">4</span><span style="display:inline-block;width:20px;text-align:center;font-weight:bold">0</span><span style="display:inline-block;width:20px;text-align:center;font-weight:bold">5</span></div>
<div class="t" style="left:2160px;top:806px;font-size:23px;color:#555;">小双</div>
<div class="t" style="left:2235px;top:806px;font-size:23px;color:#555;">小单</div>
<div class="t" style="left:2310px;top:806px;font-size:23px;color:#555;">组六</div>
<div class="t" style="left:1860px;top:850px;font-size:23px;color:#555;letter-spacing:-0.8px">2401061359</div>
<div class="t" style="left:2014px;top:850px;font-size:23px;color:#c8372f;"><span style="display:inline-block;width:20px;text-align:center">7</span><span style="display:inline-block;width:20px;text-align:center">5</span><span style="display:inline-block;width:20px;text-align:center;font-weight:bold">8</span><span style="display:inline-block;width:20px;text-align:center;font-weight:bold">5</span><span style="display:inline-block;width:20px;text-align:center;font-weight:bold">6</span></div>
<div class="t" style="left:2160px;top:850px;font-size:23px;color:#555;">小单</div>
<div class="t" style="left:2235px;top:850px;font-size:23px;color:#555;">大双</div>
<div class="t" style="left:2310px;top:850px;font-size:23px;color:#555;">组六</div>
<div class="t" style="left:1860px;top:895px;font-size:23px;color:#555;letter-spacing:-0.8px">2401061354</div>
<div class="t" style="left:2014px;top:895px;font-size:23px;color:#c8372f;"><span style="display:inline-block;width:20px;text-align:center">0</span><span style="display:inline-block;width:20px;text-align:center">4</span><span style="display:inline-block;width:20px;text-align:center;font-weight:bold">8</span><span style="display:inline-block;width:20px;text-align:center;font-weight:bold">9</span><span style="display:inline-block;width:20px;text-align:center;font-weight:bold">9</span></div>
<div class="t" style="left:2160px;top:895px;font-size:23px;color:#555;">大单</div>
<div class="t" style="left:2235px;top:895px;font-size:23px;color:#555;">大单</div>
<div class="t" style="left:2310px;top:895px;font-size:23px;color:#e9812e;">组三</div>
<div class="t" style="left:1860px;top:939px;font-size:23px;color:#555;letter-spacing:-0.8px">2401061353</div>
<div class="t" style="left:2014px;top:939px;font-size:23px;color:#c8372f;"><span style="display:inline-block;width:20px;text-align:center">3</span><span style="display:inline-block;width:20px;text-align:center">6</span><span style="display:inline-block;width:20px;text-align:center;font-weight:bold">3</span><span style="display:inline-block;width:20px;text-align:center;font-weight:bold">4</span><span style="display:inline-block;width:20px;text-align:center;font-weight:bold">6</span></div>
<div class="t" style="left:2160px;top:939px;font-size:23px;color:#555;">小双</div>
<div class="t" style="left:2235px;top:939px;font-size:23px;color:#555;">大双</div>
<div class="t" style="left:2310px;top:939px;font-size:23px;color:#555;">组六</div>
<div class="t" style="left:1860px;top:983px;font-size:23px;color:#555;letter-spacing:-0.8px">2401061352</div>
<div class="t" style="left:2014px;top:983px;font-size:23px;color:#c8372f;"><span style="display:inline-block;width:20px;text-align:center">4</span><span style="display:inline-block;width:20px;text-align:center">4</span><span style="display:inline-block;width:20px;text-align:center;font-weight:bold">7</span><span style="display:inline-block;width:20px;text-align:center;font-weight:bold">1</span><span style="display:inline-block;width:20px;text-align:center;font-weight:bold">2</span></div>
<div class="t" style="left:2160px;top:983px;font-size:23px;color:#555;">小单</div>
<div class="t" style="left:2235px;top:983px;font-size:23px;color:#555;">小双</div>
<div class="t" style="left:2310px;top:983px;font-size:23px;color:#555;">组六</div>
<div class="t" style="left:1860px;top:1028px;font-size:23px;color:#555;letter-spacing:-0.8px">2401061352</div>
<div class="t" style="left:2014px;top:1028px;font-size:23px;color:#c8372f;"><span style="display:inline-block;width:20px;text-align:center">4</span><span style="display:inline-block;width:20px;text-align:center">4</span><span style="display:inline-block;width:20px;text-align:center;font-weight:bold">7</span><span style="display:inline-block;width:20px;text-align:center;font-weight:bold">1</span><span style="display:inline-block;width:20px;text-align:center;font-weight:bold">2</span></div>
<div class="t" style="left:2160px;top:1028px;font-size:23px;color:#555;">小单</div>
<div class="t" style="left:2235px;top:1028px;font-size:23px;color:#555;">小双</div>
<div class="t" style="left:2310px;top:1028px;font-size:23px;color:#555;">组六</div>
<div class="t" style="left:1860px;top:1072px;font-size:23px;color:#555;letter-spacing:-0.8px">2401061351</div>
<div class="t" style="left:2014px;top:1072px;font-size:23px;color:#c8372f;"><span style="display:inline-block;width:20px;text-align:center">9</span><span style="display:inline-block;width:20px;text-align:center">5</span><span style="display:inline-block;width:20px;text-align:center;font-weight:bold">4</span><span style="display:inline-block;width:20px;text-align:center;font-weight:bold">4</span><span style="display:inline-block;width:20px;text-align:center;font-weight:bold">3</span></div>
<div class="t" style="left:2160px;top:1072px;font-size:23px;color:#555;">小双</div>
<div class="t" style="left:2235px;top:1072px;font-size:23px;color:#555;">小单</div>
<div class="t" style="left:2310px;top:1072px;font-size:23px;color:#e9812e;">组三</div>
<div class="t" style="left:1860px;top:1116px;font-size:23px;color:#555;letter-spacing:-0.8px">2401061346</div>
<div class="t" style="left:2014px;top:1116px;font-size:23px;color:#c8372f;"><span style="display:inline-block;width:20px;text-align:center">2</span><span style="display:inline-block;width:20px;text-align:center">6</span><span style="display:inline-block;width:20px;text-align:center;font-weight:bold">4</span><span style="display:inline-block;width:20px;text-align:center;font-weight:bold">5</span><span style="display:inline-block;width:20px;text-align:center;font-weight:bold">4</span></div>
<div class="t" style="left:2160px;top:1116px;font-size:23px;color:#555;">小单</div>
<div class="t" style="left:2235px;top:1116px;font-size:23px;color:#555;">小双</div>
<div class="t" style="left:2310px;top:1116px;font-size:23px;color:#e9812e;">组三</div>
<div class="t" style="left:1860px;top:1160px;font-size:23px;color:#555;letter-spacing:-0.8px">2401061345</div>
<div class="t" style="left:2014px;top:1160px;font-size:23px;color:#c8372f;"><span style="display:inline-block;width:20px;text-align:center">9</span><span style="display:inline-block;width:20px;text-align:center">5</span><span style="display:inline-block;width:20px;text-align:center;font-weight:bold">8</span><span style="display:inline-block;width:20px;text-align:center;font-weight:bold">1</span><span style="display:inline-block;width:20px;text-align:center;font-weight:bold">5</span></div>
<div class="t" style="left:2160px;top:1160px;font-size:23px;color:#555;">小单</div>
<div class="t" style="left:2235px;top:1160px;font-size:23px;color:#555;">小单</div>
<div class="t" style="left:2310px;top:1160px;font-size:23px;color:#555;">组六</div>
<div class="t" style="left:1860px;top:1205px;font-size:23px;color:#555;letter-spacing:-0.8px">2401061344</div>
<div class="t" style="left:2014px;top:1205px;font-size:23px;color:#c8372f;"><span style="display:inline-block;width:20px;text-align:center">3</span><span style="display:inline-block;width:20px;text-align:center">5</span><span style="display:inline-block;width:20px;text-align:center;font-weight:bold">4</span><span style="display:inline-block;width:20px;text-align:center;font-weight:bold">9</span><span style="display:inline-block;width:20px;text-align:center;font-weight:bold">4</span></div>
<div class="t" style="left:2160px;top:1205px;font-size:23px;color:#555;">大单</div>
<div class="t" style="left:2235px;top:1205px;font-size:23px;color:#555;">小双</div>
<div class="t" style="left:2310px;top:1205px;font-size:23px;color:#e9812e;">组三</div>
<div class="t" style="left:2238px;top:1256px;font-size:22px;color:#3f7fd6;">查询历史开奖</div>
<div class="t" style="left:1856px;top:1325px;font-size:27px;color:#111;font-weight:bold">出号统计</div>
<div class="a" style="left:1856px;top:1363px;width:363px;height:2px;background:#d0d0d0"></div>
<div class="a" style="left:2218px;top:1309px;width:75px;height:56px;border:1.5px solid #cacaca;border-bottom:none;background:#fdf6e8"></div>
<div class="a" style="left:2294px;top:1309px;width:74px;height:53px;border:1.5px solid #cacaca;background:#f3f3f4"></div>
<div class="t" style="left:2218px;top:1327px;font-size:26px;color:#94703e;width:78px;text-align:center">冷号</div>
<div class="t" style="left:2294px;top:1327px;font-size:26px;color:#111;width:77px;text-align:center">热号</div>
<div class="t" style="left:1856px;top:1395px;font-size:24px;color:#999;">最近100期内出现次数最少的号码</div>
<div class="a" style="left:1855px;top:1447px;width:47px;height:47px;border-radius:50%;background:#e5463e"></div>
<div class="t" style="left:1855px;top:1457px;font-size:28px;color:#fff;width:47px;text-align:center">3</div>
<div class="a" style="left:1911px;top:1466px;width:360px;height:8px;background:#c3d5e2"></div>
<div class="t" style="left:2315px;top:1458px;font-size:26px;color:#333;"><span style="color:#c8372f">37</span>次</div>
<div class="a" style="left:1855px;top:1498px;width:47px;height:47px;border-radius:50%;background:#e5463e"></div>
<div class="t" style="left:1855px;top:1508px;font-size:28px;color:#fff;width:47px;text-align:center">7</div>
<div class="a" style="left:1911px;top:1517px;width:360px;height:8px;background:#c3d5e2"></div>
<div class="t" style="left:2315px;top:1509px;font-size:26px;color:#333;"><span style="color:#c8372f">37</span>次</div>
<div class="a" style="left:170px;top:1505px;width:2220px;height:37px;background:linear-gradient(to bottom, rgba(0,0,0,0), rgba(0,0,0,0.045))"></div>
</body></html>
